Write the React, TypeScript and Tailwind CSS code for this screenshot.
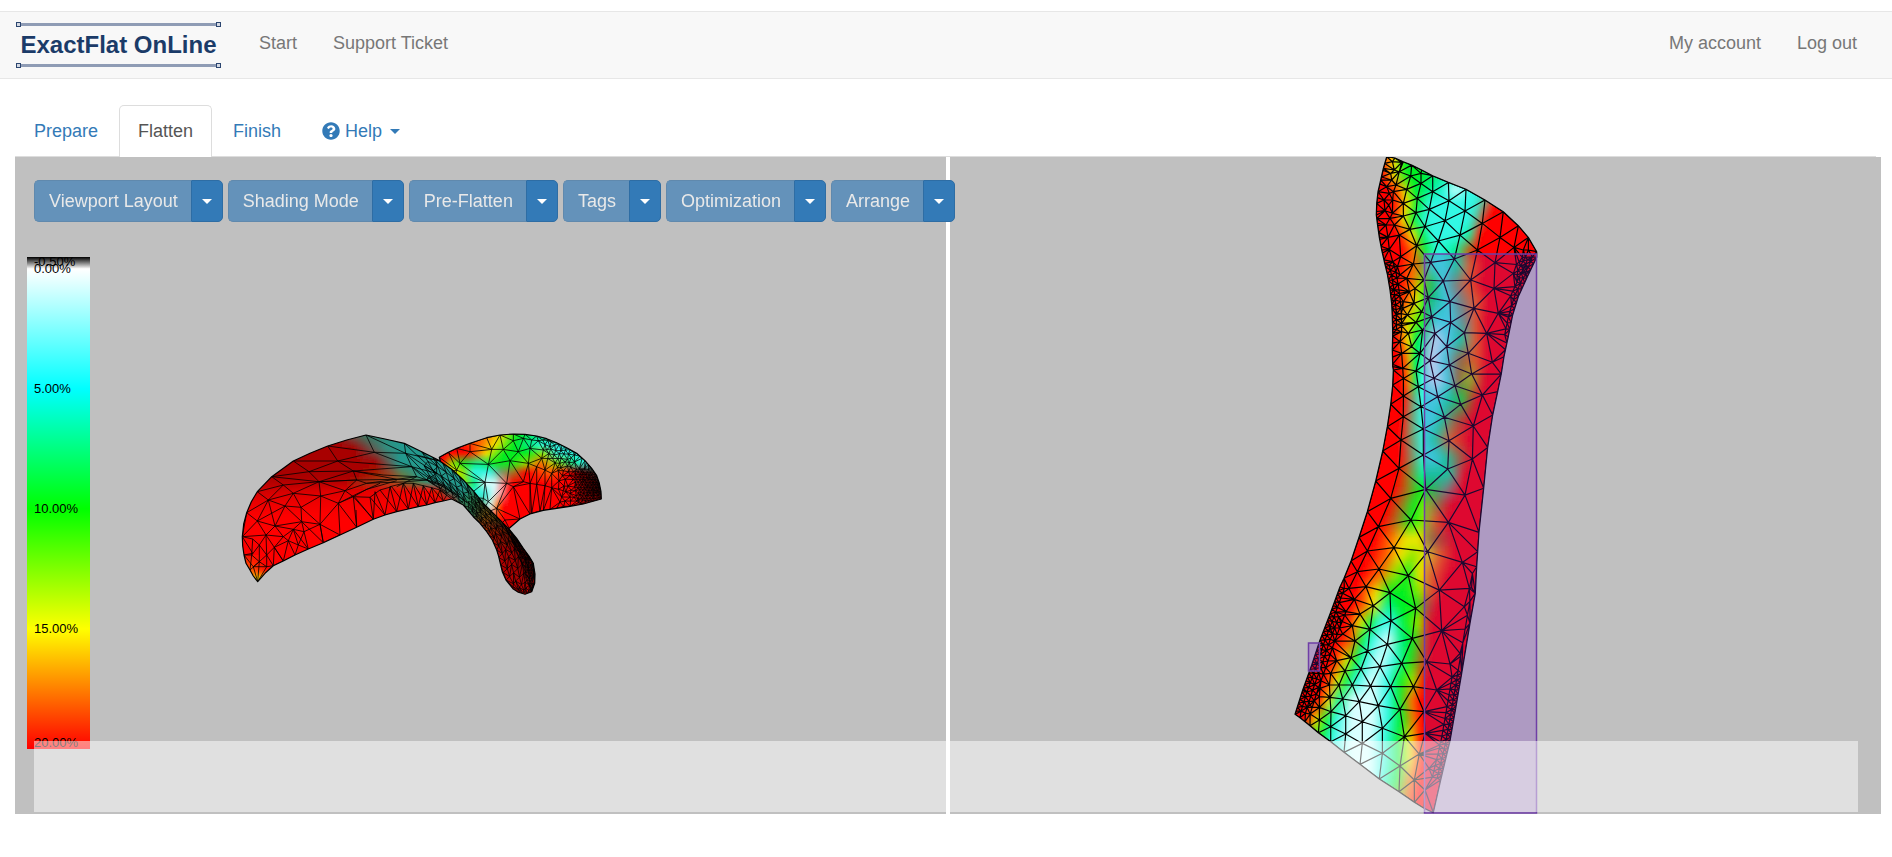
import React from "react";
import { FaQuestionCircle } from "react-icons/fa";

type Pt = [number, number];
type Rgb = [number, number, number];
type Row = [number, [number, string][]];

/* Strain colours, from compressed (white) to stretched (red). */
const PALETTE: Record<string, string> = {
  R: "ff0000",
  O: "ff6a00",
  Y: "f2e600",
  L: "90e800",
  G: "00f020",
  T: "00f090",
  C: "30f8e4",
  W: "d8ffff",
  B: "9a7a20",
  N: "70a070",
  D: "a80000",
  S: "209c90",
  M: "645850",
  K: "5c0400",
};

function toRgb(code: string): Rgb {
  const n = parseInt(PALETTE[code] ?? code, 16);
  return [(n >> 16) & 255, (n >> 8) & 255, n & 255];
}

const mix = (a: Rgb, b: Rgb, t: number): Rgb => [
  a[0] + (b[0] - a[0]) * t,
  a[1] + (b[1] - a[1]) * t,
  a[2] + (b[2] - a[2]) * t,
];

function rowColor(row: Row, x: number): Rgb {
  const s = row[1];
  if (x <= s[0][0]) return toRgb(s[0][1]);
  for (let i = 1; i < s.length; i++) {
    if (x <= s[i][0]) {
      return mix(toRgb(s[i - 1][1]), toRgb(s[i][1]), (x - s[i - 1][0]) / (s[i][0] - s[i - 1][0]));
    }
  }
  return toRgb(s[s.length - 1][1]);
}

function fieldColor(rows: Row[], x: number, y: number): string {
  let c: Rgb;
  if (y <= rows[0][0]) c = rowColor(rows[0], x);
  else {
    c = rowColor(rows[rows.length - 1], x);
    for (let i = 1; i < rows.length; i++) {
      if (y <= rows[i][0]) {
        c = mix(rowColor(rows[i - 1], x), rowColor(rows[i], x), (y - rows[i - 1][0]) / (rows[i][0] - rows[i - 1][0]));
        break;
      }
    }
  }
  return `rgb(${c.map(Math.round).join(",")})`;
}

function inside(p: Pt, poly: Pt[]): boolean {
  let hit = false;
  for (let i = 0, j = poly.length - 1; i < poly.length; j = i++) {
    const [xi, yi] = poly[i];
    const [xj, yj] = poly[j];
    if (yi > p[1] !== yj > p[1] && p[0] < ((xj - xi) * (p[1] - yi)) / (yj - yi) + xi) hit = !hit;
  }
  return hit;
}

const linePath = (p: Pt[]) => "M" + p.map(([x, y]) => `${x.toFixed(1)} ${y.toFixed(1)}`).join("L");

/* Incremental Delaunay triangulation; returns the distinct edges whose triangle lies in the outline. */
function meshPath(input: Pt[], outline: Pt[]): string {
  const pts: Pt[] = [];
  input.forEach((p, i) => {
    const q: Pt = [p[0] + ((i * 7) % 5) * 0.01, p[1] + ((i * 3) % 7) * 0.01];
    if (!pts.some((o) => Math.hypot(o[0] - q[0], o[1] - q[1]) < 1.6)) pts.push(q);
  });
  const n = pts.length;
  const all: Pt[] = [...pts, [-9000, -9000], [9000, -9000], [0, 12000]];
  type Tri = { v: number[]; x: number; y: number; r: number };
  const make = (a: number, b: number, c: number): Tri => {
    const [ax, ay] = all[a];
    const [bx, by] = all[b];
    const [cx, cy] = all[c];
    const d = 2 * (ax * (by - cy) + bx * (cy - ay) + cx * (ay - by)) || 1e-9;
    const A = ax * ax + ay * ay;
    const B = bx * bx + by * by;
    const C = cx * cx + cy * cy;
    const x = (A * (by - cy) + B * (cy - ay) + C * (ay - by)) / d;
    const y = (A * (cx - bx) + B * (ax - cx) + C * (bx - ax)) / d;
    return { v: [a, b, c], x, y, r: (ax - x) ** 2 + (ay - y) ** 2 };
  };
  let tris: Tri[] = [make(n, n + 1, n + 2)];
  for (let i = 0; i < n; i++) {
    const [px, py] = all[i];
    const edges = new Map<string, [number, number]>();
    const keep: Tri[] = [];
    for (const t of tris) {
      if ((px - t.x) ** 2 + (py - t.y) ** 2 < t.r) {
        for (let k = 0; k < 3; k++) {
          const a = t.v[k];
          const b = t.v[(k + 1) % 3];
          const key = a < b ? `${a}_${b}` : `${b}_${a}`;
          if (edges.has(key)) edges.delete(key);
          else edges.set(key, [a, b]);
        }
      } else keep.push(t);
    }
    edges.forEach(([a, b]) => keep.push(make(a, b, i)));
    tris = keep;
  }
  const seen = new Set<string>();
  let d = "";
  for (const t of tris) {
    if (t.v.some((v) => v >= n)) continue;
    const c: Pt = [
      (all[t.v[0]][0] + all[t.v[1]][0] + all[t.v[2]][0]) / 3,
      (all[t.v[0]][1] + all[t.v[1]][1] + all[t.v[2]][1]) / 3,
    ];
    if (!inside(c, outline)) continue;
    for (let k = 0; k < 3; k++) {
      const a = Math.min(t.v[k], t.v[(k + 1) % 3]);
      const b = Math.max(t.v[k], t.v[(k + 1) % 3]);
      const key = `${a}_${b}`;
      if (seen.has(key)) continue;
      seen.add(key);
      d += linePath([all[a], all[b]]);
    }
  }
  return d;
}

/* Reads "x,y x,y" lists given in thirds of a unit from an origin. */
const read = (ox: number, oy: number, s: string): Pt[] =>
  s
    .trim()
    .split(/\s+/)
    .map((p) => {
      const [x, y] = p.split(",").map(Number);
      return [ox + x / 3, oy + y / 3] as Pt;
    });

const shift = (rows: Row[], dx: number, dy: number, k: number): Row[] =>
  rows.map(([y, s]) => [y * k + dy, s.map(([x, c]) => [x * k + dx, c] as [number, string])] as Row);

const row = (y: number, s: string): Row => [
  y,
  s.split(" ").map((e) => {
    const [x, c] = e.split(":");
    return [Number(x), c] as [number, string];
  }),
];

/* Points along a polyline, `step` apart, moved sideways by dx. */
function along(line: Pt[], step: number, dx = 0, start = 0): Pt[] {
  const out: Pt[] = [];
  let left = start;
  for (let i = 1; i < line.length; i++) {
    const [ax, ay] = line[i - 1];
    const [bx, by] = line[i];
    const len = Math.hypot(bx - ax, by - ay);
    while (left < len) {
      out.push([ax + ((bx - ax) * left) / len + dx, ay + ((by - ay) * left) / len]);
      left += step;
    }
    left -= len;
  }
  return out;
}

/* Point at fraction t of a polyline's vertices. */
function at(line: Pt[], t: number): Pt {
  const f = Math.min(t, 0.9999) * (line.length - 1);
  const i = Math.floor(f);
  const k = f - i;
  return [line[i][0] + (line[i + 1][0] - line[i][0]) * k, line[i][1] + (line[i + 1][1] - line[i][1]) * k];
}

/* Long thin triangles running between two edges. */
function ribbonPath(a: Pt[], b: Pt[], lanes: number, steps: number): string {
  const node = (i: number, j: number): Pt => {
    const t = Math.min(1, Math.max(0, (i + (j % 2) * 0.5) / steps));
    const [ax, ay] = at(a, t);
    const [bx, by] = at(b, t);
    const u = j / lanes;
    return [ax + (bx - ax) * u, ay + (by - ay) * u];
  };
  let d = "";
  for (let j = 0; j <= lanes; j++) {
    d += linePath(Array.from({ length: steps + 1 }, (_, i) => node(i, j)));
    if (j < lanes) {
      for (let i = 0; i < steps; i++) d += linePath([node(i, j), node(i, j + 1), node(i + 1, j)]);
    }
  }
  return d;
}

function scatter(poly: Pt[], step: number, seed: number): Pt[] {
  let s = seed;
  const rnd = () => {
    s = (s * 16807) % 2147483647;
    return s / 2147483647 - 0.5;
  };
  const xs = poly.map((p) => p[0]);
  const ys = poly.map((p) => p[1]);
  const out: Pt[] = [];
  let odd = false;
  for (let y = Math.min(...ys); y < Math.max(...ys); y += step * 0.87) {
    odd = !odd;
    for (let x = Math.min(...xs) + (odd ? step / 2 : 0); x < Math.max(...xs); x += step) {
      const p: Pt = [x + rnd() * step * 0.5, y + rnd() * step * 0.5];
      if (inside(p, poly)) out.push(p);
    }
  }
  return out;
}

/* ---- flat pattern piece ---- */
const flatLeft: Pt[] = [
  ...read(410, -7, "80,20 70,55 62,90 54,125 50,160 49,195 52,220 58,262 65,300 74,340 82,372 90,420 95,462 97,500 98,550 97,600 98,650"),
  ...read(390, 213, "160,0 158,45 152,103 142,170 128,243 107,333 82,425 57,502 33,573 12,625 0,650"),
  ...read(330, 433, "150,72 120,150 95,225 68,300 45,373"),
];
const flatBottom = read(330, 433, "60,383 75,395 90,407 115,428 152,455 192,487 240,523 298,567 357,605 403,637 432,655 460,668");
const flatRight: Pt[] = [
  ...read(330, 433, "482,570 510,453 528,350 545,250 570,100 586,10"),
  ...read(390, 213, "410,590 413,545 417,487 431,355 443,232 458,135 473,65"),
  ...read(410, -7, "424,672 432,620 445,560 458,495 475,440 500,385 530,322"),
];
const flatTop = read(410, -7, "530,305 505,262 475,227 430,185 375,150 318,118 265,97 218,77 185,60 155,45 130,35 105,24");
const flatOutline: Pt[] = [...flatLeft, ...flatBottom, ...flatRight, ...flatTop];

const flatPoints: Pt[] = [
  ...flatOutline,
  ...along(flatLeft.slice(0, 17), 7),
  ...along(flatLeft.slice(9, 15), 5, 4, 2),
  ...along(flatLeft.slice(9, 15), 6, 9, 3),
  ...along(flatLeft.slice(27), 4),
  ...along(flatLeft.slice(27), 5, 5, 2),
  ...along(flatLeft.slice(28), 6, 10, 3),
  ...along(flatLeft.slice(28), 7, 15, 1),
  ...along(flatRight.slice(0, 4), 4),
  ...along(flatRight.slice(0, 4), 5, -4, 2),
  ...along(flatRight.slice(0, 4), 6, -9, 3),
  ...along(flatRight.slice(3, 7), 14, -4, 3),
  ...along(flatRight.slice(14), 7),
  ...along(flatRight.slice(15), 6, -4, 2),
  ...along(flatRight.slice(17), 5, -8, 1),
  ...scatter(read(410, -7, "462,320 526,320 497,375 475,400"), 5, 17),
  ...read(
    410,
    -7,
    `97,35 92,70 80,110 72,150 75,182 78,225 88,298 84,262 125,37 118,65 108,105 98,150 97,190 103,225 118,255 122,320 98,335 105,365
     140,385 152,78 140,118 130,160 130,198 150,238 170,287 160,342 103,60 95,90 88,130 86,165 100,125 90,205 112,350 120,375
     183,70 183,100 172,145 168,188 218,125 208,178 195,230 267,152 255,212 235,273 212,337 192,390 205,443 185,485
     315,183 300,255 283,327 250,393 270,455 272,517 260,590 268,645 367,220 352,300 332,390 342,475 313,548 325,610 335,672
     420,262 405,338 402,415 415,490 380,550 397,637 462,292 460,370 455,437 447,495
     118,430 130,455 112,490 142,495 128,475 125,520 168,517 145,550 120,575 155,590 125,610 162,460 188,540 215,500 180,610
     210,632 168,663 128,655 225,550 148,425 165,415 490,300 505,300 222,685`
  ),
  ...read(
    390,
    213,
    `190,25 230,5 235,50 243,110 250,177 250,255 257,358 213,450 263,545 205,617 150,668 190,78 190,140 183,210 177,295 152,385
     115,470 162,533 82,543 117,597 52,605 78,650 27,655 282,25 293,80 313,142 327,212 323,297 325,457 298,660 345,47 362,103
     397,12 427,75 400,168 397,267 375,375 367,577 388,655`
  ),
  ...read(
    330,
    433,
    `330,10 407,55 333,92 397,145 270,118 280,47 322,163 263,183 300,230 365,220 440,215 485,122 510,222 470,300 553,50
     547,155 400,290 332,290 272,288 217,285 177,285 243,237 195,243 213,203 225,153 240,72 190,10 223,28 198,65 182,97 217,107
     188,132 168,68 152,118 295,347 238,335 188,327 150,322 360,358 432,365 497,382 373,440 307,415 247,395 197,377 153,365
     118,352 118,390 152,410 197,432 247,460 307,490 360,528 418,492 478,465 403,570 447,535 435,600 435,430 170,212 152,250
     120,295 148,285 90,345 92,375 118,320 540,190`
  ),
];

const flatMesh = meshPath(flatPoints, flatOutline);

const flatRows = shift(
  [
    row(157, "1387:O 1395:Y 1403:G 1425:G"),
    row(175, "1385:R 1393:Y 1405:G 1420:G 1440:T 1460:C"),
    row(190, "1390:R 1400:O 1404:Y 1412:G 1430:T 1445:C 1455:W 1470:C"),
    row(203, "1394:R 1401:O 1407:Y 1416:G 1430:C 1455:C 1475:C 1485:N 1493:R"),
    row(220, "1395:R 1403:Y 1412:G 1425:C 1455:C 1469:C 1478:N 1485:R"),
    row(235, "1398:R 1406:O 1412:Y 1420:G 1432:C 1460:C 1470:T 1479:R"),
    row(250, "1403:R 1413:O 1424:G 1438:C 1456:T 1466:B 1476:R"),
    row(265, "1400:R 1412:O 1422:B 1430:C 1445:C 1458:T 1470:O 1485:R"),
    row(285, "1400:R 1412:O 1420:L 1432:G 1442:C 1455:N 1468:O 1482:R"),
    row(300, "1398:R 1408:O 1416:Y 1424:G 1435:T 1447:C 1460:N 1475:O 1488:R"),
    row(320, "1397:R 1405:Y 1413:L 1425:G 1435:C 1450:C 1465:N 1475:O 1485:R"),
    row(340, "1398:R 1408:Y 1413:G 1422:T 1435:W 1450:C 1462:T 1475:O 1487:R"),
    row(360, "1399:R 1407:O 1412:G 1420:T 1432:W 1445:C 1460:B 1475:O 1487:R"),
    row(380, "1402:R 1408:O 1414:G 1422:C 1435:W 1448:C 1457:B 1470:L 1484:R"),
    row(400, "1404:R 1413:N 1422:C 1437:C 1450:T 1462:G 1476:R"),
    row(420, "1402:R 1412:N 1422:C 1432:C 1442:T 1455:B 1470:R"),
    row(440, "1400:R 1412:N 1424:C 1435:T 1450:O 1468:R"),
    row(457, "1400:R 1414:N 1424:C 1435:C 1446:T 1460:B 1470:R"),
    row(475, "1398:R 1408:B 1422:T 1438:T 1450:T 1463:R"),
    row(490, "1394:R 1408:B 1420:G 1430:G 1445:N 1460:R"),
    row(505, "1388:R 1402:B 1414:G 1426:L 1438:B 1450:R"),
    row(520, "1383:R 1398:B 1411:G 1425:L 1435:O 1448:R"),
    row(540, "1375:R 1390:O 1405:Y 1418:Y 1432:B 1455:R"),
    row(555, "1370:R 1388:O 1400:Y 1412:L 1428:Y 1440:O 1455:R"),
    row(575, "1362:R 1380:O 1394:L 1408:G 1420:Y 1432:O 1448:R"),
    row(592, "1357:R 1366:O 1376:Y 1388:G 1405:G 1420:L 1430:O 1443:R"),
    row(605, "1353:R 1365:O 1373:Y 1387:T 1400:G 1415:G 1425:B 1437:R"),
    row(622, "1348:R 1360:Y 1370:G 1380:C 1392:C 1405:G 1418:L 1430:R"),
    row(640, "1340:R 1352:O 1360:G 1372:C 1388:W 1400:T 1412:G 1422:B 1430:R"),
    row(660, "1335:R 1345:Y 1355:G 1365:C 1380:W 1395:C 1408:G 1420:B 1430:R"),
    row(680, "1327:R 1336:Y 1345:G 1357:C 1372:W 1388:C 1400:G 1412:L 1424:R"),
    row(700, "1320:R 1328:Y 1338:T 1353:W 1372:W 1388:C 1400:G 1412:O 1420:R"),
    row(720, "1307:R 1316:Y 1325:G 1336:C 1352:W 1372:W 1387:C 1402:G 1414:O 1421:R"),
    row(740, "1320:G 1332:C 1350:W 1370:W 1385:C 1400:G 1410:Y 1420:R"),
    row(760, "1335:C 1352:W 1370:W 1385:C 1400:G 1410:Y 1420:R"),
    row(780, "1370:W 1382:C 1398:G 1410:O 1418:R"),
    row(813, "1385:G 1402:O 1410:R"),
  ],
  -950,
  -157,
  1
);

/* ---- folded piece: far side ---- */
const farOutline = read(
  215,
  263,
  `628,112 655,97 680,85 720,70 770,53 810,45 850,42 885,43 920,48 950,56 980,68 1010,83 1040,100 1065,122 1085,145 1100,167 1108,190
   1113,215 1114,237 1060,252 1020,259 980,265 940,271 900,282 870,297 838,325 800,325 750,285 710,230 670,190 640,160`
);
const farPoints: Pt[] = [
  ...farOutline,
  ...along(farOutline.slice(10, 20), 3),
  ...read(
    215,
    263,
    `720,95 785,88 850,62 690,130 775,133 840,122 830,190 765,187 850,200 880,185 920,193 895,130 865,95
     900,85 935,115 820,88 760,235 775,245 800,265 825,300 905,280 930,273 960,268
     900,190 945,197 965,203 985,208 1000,212 1020,220 920,140 945,150 965,160 925,62 905,60 880,55 940,90 960,80 680,150`
  ),
  ...scatter(read(215, 263, "920,50 980,68 1040,100 1040,170 980,150 930,90"), 5, 31),
  ...scatter(read(215, 263, "1030,140 1080,140 1108,190 1114,237 1040,254 1030,180"), 3, 11),
  ...scatter(read(215, 263, "980,150 1030,160 1035,255 990,262"), 6, 5),
];
const farMesh = meshPath(farPoints, farOutline);
const farRows = shift(
  [
    row(45, "760:O 810:Y 860:G 920:T"),
    row(75, "690:R 750:O 795:Y 850:G 900:T 940:C 990:C"),
    row(100, "640:R 715:R 770:Y 820:G 890:G 940:L 980:C 1040:C"),
    row(130, "640:R 665:L 700:G 745:T 790:G 840:G 890:L 930:O 980:L 1030:T 1060:C"),
    row(155, "670:Y 700:L 730:C 780:C 810:N 850:B 890:R 960:O 1010:R 1060:700000 1100:302020"),
    row(190, "700:L 735:T 765:W 795:W 825:ff7070 845:R 1030:R 1070:700000 1110:200000"),
    row(220, "740:C 765:C 790:W 820:ff8080 840:R 1030:R 1070:700000 1110:300000"),
    row(260, "760:N 780:W 805:O 820:R 1040:R"),
    row(320, "780:R 1000:R"),
  ],
  215,
  263,
  1 / 3
);

/* ---- folded piece: near side ---- */
const nearOutline = read(
  215,
  263,
  `37,350 41,312 50,278 64,245 82,215 125,170 190,123 240,100 293,78 350,60 408,45 465,57 523,70 575,95 625,120 665,148 700,180 732,215
   760,250 800,290 838,328 860,355 880,385 897,408 910,430 915,462 914,490 905,515 885,523 865,517 850,507 828,480 817,455 812,435
   806,410 800,390 787,360 770,335 750,310 730,290 700,255 665,237 640,243 615,248 590,255 565,260 535,267 500,275 465,285 430,298
   380,322 330,345 280,368 235,387 195,405 160,423 130,437 105,460 83,485 70,468 60,450 48,430 42,405 38,378`
);
const nearLines = [
  "408,45 433,97 527,100 523,70",
  "408,45 527,100 625,122",
  "523,70 560,105 625,122",
  "293,78 433,97 323,123 293,78",
  "190,123 323,123 237,155 190,123",
  "323,123 370,153 237,155",
  "433,97 545,140 323,123",
  "545,140 370,153 500,178",
  "527,100 545,140 620,160 527,100",
  "125,170 237,155 267,185 370,153 380,180 267,185",
  "125,170 267,185 160,195 125,170",
  "82,215 160,195 190,220 267,185 345,212 380,180",
  "82,215 115,240 160,195",
  "50,278 115,240 190,220 165,258 115,240 82,303 50,278",
  "165,258 82,303 135,318 165,258",
  "190,220 272,228 213,262 190,220",
  "267,185 272,228 345,212 325,250 272,228 270,313 325,250 370,230",
  "165,258 213,262 215,305 165,258",
  "135,318 215,305 270,313 213,262",
  "115,240 135,318",
  "37,350 82,303 108,345 37,350 68,357",
  "50,278 37,350 68,400 42,405",
  "108,345 135,318 160,350 108,345 133,382 160,350 190,328 135,318",
  "190,328 215,305 222,335 190,328 175,362 160,350",
  "222,335 270,313 280,368 215,305",
  "222,335 235,387 190,328 205,375 222,335",
  "205,375 195,405 175,362 205,375 235,387",
  "175,362 160,423 133,382 175,362",
  "68,357 88,375 108,345 110,405 133,382 130,437 110,405 88,375 65,405 68,357",
  "42,405 65,405 88,425 110,405 110,440 88,425 88,375",
  "65,405 60,450 88,425 70,440 83,485 88,425",
  "42,405 70,440 110,440 83,485",
  "110,440 130,437 160,423",
  "133,382 160,423 195,405",
  "345,212 410,190 500,178 560,170 500,200",
  "345,212 370,230 410,208 500,182",
  "380,180 410,190 450,188 520,186 590,180 640,200",
  "370,153 460,165 560,170 545,140 590,180 500,178",
  "267,185 380,180 500,178",
  "325,250 380,222 450,190",
  "270,313 330,345 325,250 380,322 370,230 430,298 375,232",
  "270,313 280,368 330,345",
  "380,322 378,270",
  "370,230 420,232 430,298 435,215 465,285 420,232",
  "420,232 450,210 500,275 480,200 465,285",
  "480,200 520,190 500,275",
  "450,210 485,200 535,267 520,190 550,190 535,267",
  "520,190 565,260 550,190 580,197 565,260",
  "550,190 590,255 580,197 605,203 590,255",
  "580,197 615,248 605,203 630,210 615,248",
  "605,203 640,243 630,210 650,225 640,243",
  "630,210 665,237",
  "527,100 590,165 650,205 700,240",
  "560,105 620,160 690,225",
  "545,140 620,190 680,225",
  "560,170 640,195 700,250",
  "620,122 620,160 590,180 650,215",
];
const strapRight = read(215, 263, "575,95 625,120 665,148 700,180 732,215 760,250 800,290 838,328 880,385 910,430 914,490 900,520");
const strapLeft = read(215, 263, "590,180 620,200 650,220 680,242 705,260 730,290 752,315 775,345 800,390 812,435 828,480 870,520");
const nearMesh =
  nearLines.map((l) => linePath(read(215, 263, l))).join("") +
  ribbonPath(strapLeft.slice(0, 5), strapRight.slice(0, 5), 4, 6) +
  ribbonPath(strapLeft.slice(4), strapRight.slice(4), 6, 14) +
  meshPath(
    [
      ...read(215, 263, "815,300 838,328 880,385 910,430 914,490 905,515 870,480 875,430 850,370"),
      ...scatter(read(215, 263, "815,310 838,328 880,385 910,430 914,490 905,515 885,480 880,420 850,365"), 3, 23),
    ],
    read(215, 263, "810,300 838,328 880,385 910,430 914,490 905,515 885,480 870,420 845,360")
  );
const nearRows = shift(
  [
    row(45, "320:D 365:M 410:308068 500:S"),
    row(85, "370:D 425:M 470:309080 520:S"),
    row(130, "435:D 475:M 510:S 640:S"),
    row(165, "380:D 440:a82800 480:a04020 520:608048 570:S 680:S"),
    row(188, "120:b40000 340:b80000 400:a03010 500:a85020 560:508048 620:S 720:S"),
    row(212, "120:d00000 400:e40000 600:R 630:d02000 650:207058 700:S 720:208060"),
    row(245, "60:e80000 300:f00000 660:R 690:208060 720:288050 760:204020"),
    row(290, "60:R 680:R 720:208060 745:505020 770:805010 810:103010"),
    row(340, "60:R 700:R 770:a02000 800:901000 850:381000"),
    row(400, "60:R 700:R 800:b00000 850:a00000 890:500000"),
    row(450, "50:O 110:R 700:R 820:b00000 860:a00000 900:600000"),
    row(480, "70:Y 95:Y 120:O 200:R 800:c00000 900:a00000"),
    row(523, "80:Y 800:d00000"),
  ],
  215,
  263,
  1 / 3
);

function Piece({
  id,
  outline,
  mesh,
  rows,
  cell,
  stroke,
}: {
  id: string;
  outline: Pt[];
  mesh: string;
  rows: Row[];
  cell: number;
  stroke: number;
}) {
  const { cells, path } = React.useMemo(() => {
    const xs = outline.map((p) => p[0]);
    const ys = outline.map((p) => p[1]);
    const list: React.ReactElement[] = [];
    for (let y = Math.min(...ys) - cell * 2; y < Math.max(...ys) + cell * 2; y += cell) {
      for (let x = Math.min(...xs) - cell * 2; x < Math.max(...xs) + cell * 2; x += cell) {
        const c: Pt = [x + cell / 2, y + cell / 2];
        const r = cell * 2.5;
        const near =
          inside(c, outline) ||
          inside([c[0] - r, c[1]], outline) ||
          inside([c[0] + r, c[1]], outline) ||
          inside([c[0], c[1] - r], outline) ||
          inside([c[0], c[1] + r], outline);
        if (!near) continue;
        list.push(
          <rect key={`${x}_${y}`} x={x} y={y} width={cell + 0.5} height={cell + 0.5} fill={fieldColor(rows, c[0], c[1])} />
        );
      }
    }
    return { cells: list, path: linePath(outline) + "Z" };
  }, [outline, rows, cell]);
  return (
    <g>
      <clipPath id={`${id}-clip`}>
        <path d={path} />
      </clipPath>
      <filter id={`${id}-soft`}>
        <feGaussianBlur stdDeviation={cell * 0.5} />
      </filter>
      <g clipPath={`url(#${id}-clip)`}>
        <path d={path} fill="#b00000" />
        <g filter={`url(#${id}-soft)`}>{cells}</g>
        <path d={mesh} fill="none" stroke="#000" strokeWidth={stroke} />
      </g>
      <path d={path} fill="none" stroke="#000" strokeWidth={1.2} strokeLinejoin="round" />
    </g>
  );
}

function Caret() {
  return <span aria-hidden="true" className="inline-block border-x-[5px] border-t-[5px] border-x-transparent border-t-current" />;
}

function LogoRule() {
  return (
    <span aria-hidden="true" className="flex h-[5px] items-center">
      <span className="h-[5px] w-[5px] border border-[#2c4670] bg-[#d5dae4]" />
      <span className="h-[3px] flex-1 bg-[#8f9cb5]" />
      <span className="h-[5px] w-[5px] border border-[#2c4670] bg-[#d5dae4]" />
    </span>
  );
}

const navLink = "px-[18px] py-4 text-lg leading-6 text-[#777]";
const tools = ["Viewport Layout", "Shading Mode", "Pre-Flatten", "Tags", "Optimization", "Arrange"];

export default function App() {
  return (
    <div className="bg-white pt-[11px] font-['Liberation_Sans',Arial,sans-serif] text-lg leading-6 text-[#333]">
      <nav className="flex h-[68px] items-start border-y border-[#e7e7e7] bg-[#f8f8f8] pt-[3px] pr-[17px] pl-4">
        <a href="#home" className="mt-[7px] mr-5 flex w-[205px] flex-col">
          <LogoRule />
          <span className="h-9 text-center text-2xl leading-9 font-bold whitespace-nowrap text-[#1b3b68]">
            ExactFlat OnLine
          </span>
          <LogoRule />
        </a>
        <a href="#start" className={navLink}>
          Start
        </a>
        <a href="#support" className={navLink}>
          Support Ticket
        </a>
        <div className="ml-auto flex">
          <a href="#account" className={navLink}>
            My account
          </a>
          <a href="#logout" className={navLink}>
            Log out
          </a>
        </div>
      </nav>

      <div className="mt-[26px] mr-[11px] ml-[15px]">
        <ul className="mr-[5px] flex gap-[2px] border-b border-[#ddd] text-[#337ab7]">
          <li>
            <a href="#prepare" className="block px-[19px] pt-[14px] pb-[13px]">
              Prepare
            </a>
          </li>
          <li className="-mb-px">
            <a
              href="#flatten"
              aria-current="page"
              className="block rounded-t-[5px] border border-b-0 border-[#ddd] bg-white px-[18px] pt-[13px] pb-[14px] text-[#555]"
            >
              Flatten
            </a>
          </li>
          <li>
            <a href="#finish" className="block px-[19px] pt-[14px] pb-[13px]">
              Finish
            </a>
          </li>
          <li>
            <button type="button" className="flex items-center gap-[5px] px-5 pt-[14px] pb-[13px]">
              <FaQuestionCircle size={18} />
              <span className="mr-[3px]">Help</span>
              <Caret />
            </button>
          </li>
        </ul>

        <main className="relative">
          <div className="flex gap-1">
            <section aria-label="3D view" className="relative h-[657px] flex-1 overflow-hidden bg-[#c0c0c0]">
              <svg viewBox="0 0 931 657" className="block h-full w-full">
                <Piece id="far" outline={farOutline} mesh={farMesh} rows={farRows} cell={3} stroke={0.8} />
                <Piece id="near" outline={nearOutline} mesh={nearMesh} rows={nearRows} cell={3} stroke={0.8} />
              </svg>
              <div className="absolute top-[100px] left-3 h-[492px] w-[63px] bg-[linear-gradient(to_bottom,#000_0%,#fff_2.4%,#0ff_26.8%,#0f0_51.2%,#ff0_75.6%,#f00_100%)] text-[13px] leading-4 text-black">
                <span className="absolute -top-[3px] left-[7px]">-0.50%</span>
                <span className="absolute top-1 left-[7px]">0.00%</span>
                <span className="absolute top-[124px] left-[7px]">5.00%</span>
                <span className="absolute top-[244px] left-[7px]">10.00%</span>
                <span className="absolute top-[364px] left-[7px]">15.00%</span>
                <span className="absolute top-[478px] left-[7px]">20.00%</span>
              </div>
            </section>
            <section aria-label="Flat view" className="h-[657px] flex-1 overflow-hidden bg-[#c0c0c0]">
              <svg viewBox="0 0 931 657" className="block h-full w-full">
                <Piece id="flat" outline={flatOutline} mesh={flatMesh} rows={flatRows} cell={5} stroke={1.2} />
                <g fill="rgb(117,33,200)" fillOpacity={0.24} stroke="#6f3fa6" strokeWidth={1.5}>
                  <rect x={474.5} y={97} width={112} height={559} />
                  <rect x={358.5} y={486} width={11} height={28} />
                </g>
              </svg>
            </section>
          </div>

          <div className="absolute top-[23px] left-[19px] flex gap-[5px]">
            {tools.map((name) => (
              <div key={name} className="flex h-[42px] text-white">
                <button
                  type="button"
                  disabled
                  className="rounded-l-[5px] border border-r-0 border-[#2e6da4] bg-[#337ab7] pr-[13px] pl-[14px] whitespace-nowrap opacity-65"
                >
                  {name}
                </button>
                <button
                  type="button"
                  aria-label={name + " menu"}
                  className="flex w-8 items-center justify-center rounded-r-[5px] border border-[#2e6da4] bg-[#337ab7]"
                >
                  <Caret />
                </button>
              </div>
            ))}
          </div>

          <div className="absolute right-[23px] bottom-[2px] left-[19px] h-[71px] bg-white/50" />
        </main>
      </div>
    </div>
  );
}
